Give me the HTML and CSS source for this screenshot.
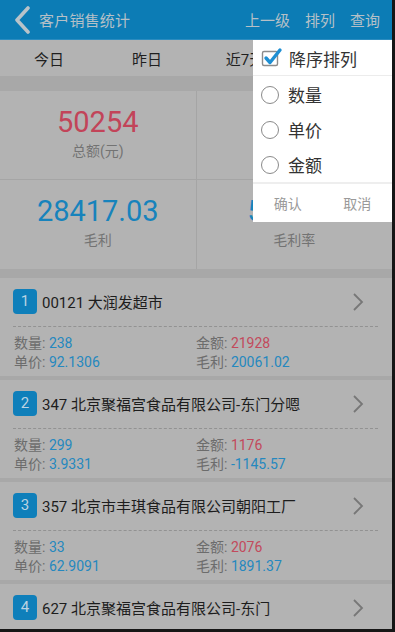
FILE: index.html
```html
<!DOCTYPE html>
<html lang="zh-CN">
<head>
<meta charset="utf-8">
<title>客户销售统计</title>
<link rel="stylesheet" href="styles.css">
</head>
<body>
<div class="screen">
  <header class="topbar">
    <div class="back">
      <svg class="back-icon" width="18" height="28" viewBox="0 0 18 28"><path d="M15 2 L4 14 L15 26" fill="none" stroke="#b9c3c9" stroke-width="3.6" stroke-linecap="round" stroke-linejoin="round"/></svg>
      <span class="title">客户销售统计</span>
    </div>
    <nav class="actions"><span>上一级</span><span>排列</span><span>查询</span></nav>
  </header>

  <div class="tabs"><span>今日</span><span>昨日</span><span>近7天</span><span>本月</span></div>

  <section class="summary">
    <div class="cell"><div class="val red">50254</div><div class="lbl">总额(元)</div></div>
    <div class="cell"><div class="val blue">570</div><div class="lbl">数量</div></div>
    <div class="cell"><div class="val blue">28417.03</div><div class="lbl">毛利</div></div>
    <div class="cell"><div class="val blue">56.55%</div><div class="lbl">毛利率</div></div>
  </section>

  <ul class="list">
    <li class="card">
      <div class="card-head"><span class="badge">1</span><span class="name">00121 大润发超市</span><svg class="chev" width="12" height="20" viewBox="0 0 12 20"><path d="M2 2 L10 10 L2 18" fill="none" stroke="#777" stroke-width="1.8"/></svg></div>
      <div class="card-body">
        <div><span class="k">数量:</span> <span class="v">238</span></div>
        <div><span class="k">金额:</span> <span class="v r">21928</span></div>
        <div><span class="k">单价:</span> <span class="v">92.1306</span></div>
        <div><span class="k">毛利:</span> <span class="v">20061.02</span></div>
      </div>
    </li>
    <li class="card">
      <div class="card-head"><span class="badge">2</span><span class="name">347 北京聚福宫食品有限公司-东门分嗯</span><svg class="chev" width="12" height="20" viewBox="0 0 12 20"><path d="M2 2 L10 10 L2 18" fill="none" stroke="#777" stroke-width="1.8"/></svg></div>
      <div class="card-body">
        <div><span class="k">数量:</span> <span class="v">299</span></div>
        <div><span class="k">金额:</span> <span class="v r">1176</span></div>
        <div><span class="k">单价:</span> <span class="v">3.9331</span></div>
        <div><span class="k">毛利:</span> <span class="v">-1145.57</span></div>
      </div>
    </li>
    <li class="card">
      <div class="card-head"><span class="badge">3</span><span class="name">357 北京市丰琪食品有限公司朝阳工厂</span><svg class="chev" width="12" height="20" viewBox="0 0 12 20"><path d="M2 2 L10 10 L2 18" fill="none" stroke="#777" stroke-width="1.8"/></svg></div>
      <div class="card-body">
        <div><span class="k">数量:</span> <span class="v">33</span></div>
        <div><span class="k">金额:</span> <span class="v r">2076</span></div>
        <div><span class="k">单价:</span> <span class="v">62.9091</span></div>
        <div><span class="k">毛利:</span> <span class="v">1891.37</span></div>
      </div>
    </li>
    <li class="card">
      <div class="card-head"><span class="badge">4</span><span class="name">627 北京聚福宫食品有限公司-东门</span><svg class="chev" width="12" height="20" viewBox="0 0 12 20"><path d="M2 2 L10 10 L2 18" fill="none" stroke="#777" stroke-width="1.8"/></svg></div>
      <div class="card-body">
        <div><span class="k">数量:</span> <span class="v">120</span></div>
        <div><span class="k">金额:</span> <span class="v r">1980</span></div>
        <div><span class="k">单价:</span> <span class="v">16.5000</span></div>
        <div><span class="k">毛利:</span> <span class="v">842.11</span></div>
      </div>
    </li>
  </ul>

  <div class="sort-menu">
    <div class="menu-row check-row">
      <svg class="checkbox" width="24" height="22" viewBox="0 0 24 22"><rect x="2.5" y="5.5" width="15" height="14" rx="1.5" fill="#fff" stroke="#8c8c8c" stroke-width="1.4"/><path d="M6 12 L10 16.5 L20 4" fill="none" stroke="#1e8fd3" stroke-width="3.4" stroke-linecap="round" stroke-linejoin="round"/></svg>
      <span>降序排列</span>
    </div>
    <div class="radios">
      <div class="menu-row"><span class="radio"></span><span>数量</span></div>
      <div class="menu-row"><span class="radio"></span><span>单价</span></div>
      <div class="menu-row"><span class="radio"></span><span>金额</span></div>
    </div>
    <div class="menu-btns"><span>确认</span><span>取消</span></div>
  </div>
</div>
</body>
</html>
```

FILE: styles.css
```css
* { box-sizing: border-box; }
html { background: #161616; }
body {
  margin: 0;
  font-family: Roboto, "Noto Sans CJK SC", sans-serif;
}
.screen {
  position: relative;
  width: 392px;
  height: 629px;
  overflow: hidden;
  background: #a8a8a8;
}
.topbar {
  height: 40px;
  background: #0c7cb5;
  border-bottom: 1px solid #2b8cc0;
  display: flex;
  align-items: center;
  justify-content: space-between;
  color: #b6c0c7;
  font-size: 15px;
}
.back { display: flex; align-items: center; padding-left: 13px; }
.back-icon { display: block; margin-right: 8px; }
.title { letter-spacing: 0.2px; }
.actions { display: flex; gap: 15px; padding-right: 12px; }

.tabs {
  height: 36px;
  background: #b3b3b3;
  display: flex;
  align-items: center;
  font-size: 15px;
  color: #1f1f1f;
}
.tabs span { flex: 1; text-align: center; }

.summary {
  margin-top: 15px;
  display: grid;
  grid-template-columns: 1fr 1fr;
  gap: 1px;
  background: #a5a5a5;
}
.cell {
  background: #b3b3b3;
  height: 88px;
  padding-top: 14px;
  text-align: center;
}
.cell:nth-child(n+3) { height: 89px; }
.val { font-size: 29px; line-height: 34px; }
.lbl { font-size: 14px; line-height: 20px; margin-top: 2px; color: #737373; }
.red { color: #c24459; }
.blue { color: #1783bc; }

.list {
  list-style: none;
  margin: 9px 0 0;
  padding: 0;
  display: flex;
  flex-direction: column;
  gap: 4px;
}
.card {
  background: #b3b3b3;
  height: 98px;
  padding: 11px 14px 4px 13px;
}
.card-head {
  height: 25px;
  display: flex;
  align-items: center;
}
.badge {
  width: 24px;
  height: 25px;
  border-radius: 4px;
  background: #0f7fba;
  color: #bcd3e2;
  font-size: 15px;
  line-height: 25px;
  text-align: center;
}
.name {
  flex: 1;
  margin-left: 5px;
  font-size: 15px;
  color: #1d1d1d;
  white-space: nowrap;
}
.chev { display: block; margin-right: 14px; }
.card-body {
  margin-top: 12px;
  border-top: 1px dashed #929292;
  padding-top: 7px;
  display: grid;
  grid-template-columns: 1fr 1fr;
  grid-auto-rows: 19px;
  font-size: 14px;
  line-height: 19px;
  padding-left: 1px;
}
.k { color: #6c6c6c; }
.v { color: #2588bf; }
.v.r { color: #c24a5c; }

.sort-menu {
  position: absolute;
  top: 40px;
  right: 0;
  width: 139px;
  background: #fff;
  color: #333;
  font-size: 17px;
}
.menu-row {
  height: 35px;
  display: flex;
  align-items: center;
  padding-left: 8px;
}
.check-row {
  height: 36px;
  padding-top: 2px;
  padding-left: 7px;
  border-bottom: 1px solid #ececec;
}
.checkbox { display: block; margin-right: 5px; margin-top: -3px; }
.radios { padding-top: 1px; }
.radio {
  width: 18px;
  height: 18px;
  border: 1.3px solid #8a8a8a;
  border-radius: 50%;
  margin-right: 9px;
}
.menu-btns {
  border-top: 2px solid #eeeeee;
  height: 40px;
  display: flex;
  align-items: center;
  font-size: 14px;
  color: #9a9a9a;
}
.menu-btns span { flex: 1; text-align: center; }
```
